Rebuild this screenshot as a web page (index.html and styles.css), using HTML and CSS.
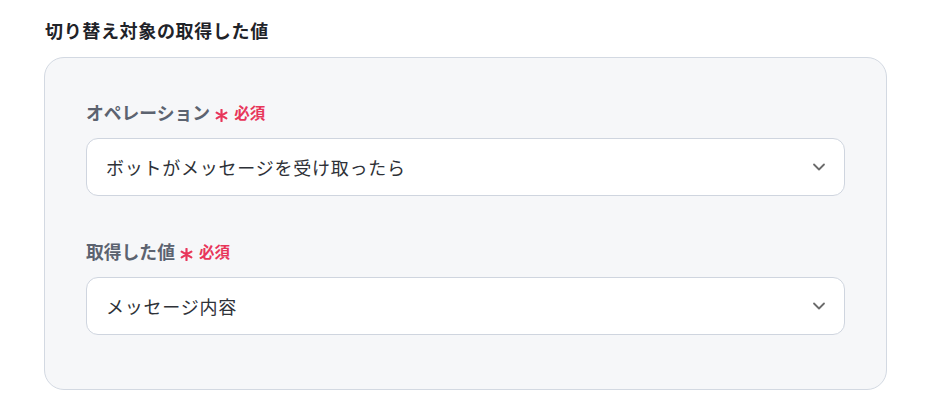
FILE: index.html
```html
<!DOCTYPE html>
<html lang="ja">
<head>
<meta charset="utf-8">
<link rel="stylesheet" href="styles.css">
</head>
<body>
<div class="page">
  <h2 class="title">切り替え対象の取得した値</h2>
  <div class="card">
    <div class="field">
      <div class="label">オペレーション<svg class="ast" width="13" height="13" viewBox="0 0 12 12"><path d="M6 0.8 V11.2 M1.5 3.4 L10.5 8.6 M1.5 8.6 L10.5 3.4" stroke="#e8365a" stroke-width="2" stroke-linecap="round"/></svg><span class="req">必須</span></div>
      <div class="select">
        <span class="value">ボットがメッセージを受け取ったら</span>
        <svg class="chev" width="14" height="14" viewBox="0 0 14 14"><path d="M2 4.5 L7 9.5 L12 4.5" fill="none" stroke="#6b6b6b" stroke-width="1.8" stroke-linecap="round" stroke-linejoin="round"/></svg>
      </div>
    </div>
    <div class="field">
      <div class="label">取得した値<svg class="ast" width="13" height="13" viewBox="0 0 12 12"><path d="M6 0.8 V11.2 M1.5 3.4 L10.5 8.6 M1.5 8.6 L10.5 3.4" stroke="#e8365a" stroke-width="2" stroke-linecap="round"/></svg><span class="req">必須</span></div>
      <div class="select">
        <span class="value">メッセージ内容</span>
        <svg class="chev" width="14" height="14" viewBox="0 0 14 14"><path d="M2 4.5 L7 9.5 L12 4.5" fill="none" stroke="#6b6b6b" stroke-width="1.8" stroke-linecap="round" stroke-linejoin="round"/></svg>
      </div>
    </div>
  </div>
</div>
</body>
</html>
```
FILE: styles.css
```css
* { box-sizing: border-box; }
html, body { margin: 0; padding: 0; background: #ffffff; }
body { font-family: "Noto Sans CJK JP", "Noto Sans", sans-serif; }
.page { padding: 17px 0 0 44px; width: 887px; }
.title {
  margin: 0 0 14px 1px;
  font-size: 18px;
  line-height: 26px;
  font-weight: 700;
  letter-spacing: 0.65px;
  color: #1f2329;
}
.card {
  border: 1px solid #d3d9e2;
  border-radius: 20px;
  background: #f6f7f9;
  padding: 42px 41px 54px 41px;
  display: flex;
  flex-direction: column;
  gap: 43px;
}
.label {
  font-size: 17.8px;
  line-height: 24px;
  font-weight: 700;
  color: #5c6370;
  margin-bottom: 14px;
  display: flex;
  align-items: center;
}
.ast {
  display: block;
  margin-left: 5px;
  position: relative;
  top: 3px;
}
.req {
  color: #e8365a;
  font-size: 15.5px;
  font-weight: 700;
  margin-left: 6px;
}
.select {
  height: 58px;
  background: #ffffff;
  border: 1px solid #cfd5df;
  border-radius: 12px;
  display: flex;
  align-items: center;
  justify-content: space-between;
  padding: 0 18px 0 19px;
}
.value {
  font-size: 18px;
  color: #2e3137;
  letter-spacing: 0.75px;
}
.chev { display: block; }
```
